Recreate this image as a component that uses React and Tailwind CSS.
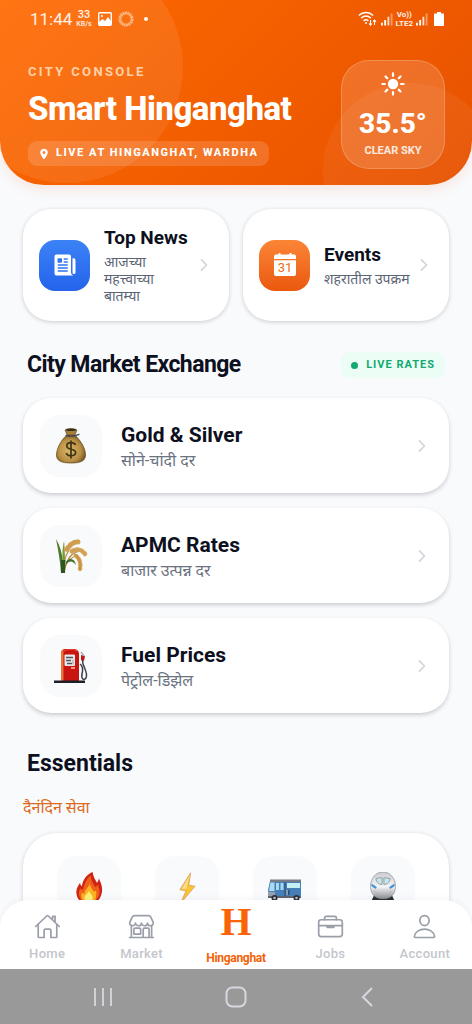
import React, { useState } from 'react'
import {
  IoNewspaper,
  IoLocationSharp,
  IoSunny,
  IoHomeOutline,
  IoStorefrontOutline,
  IoBriefcaseOutline,
  IoPersonOutline,
  IoChevronForward,
} from 'react-icons/io5'

// Emoji style drawings
const MoneyBag = () => (
  <svg viewBox="0 0 36 36" className="w-9 h-9" aria-hidden="true">
    <defs>
      <radialGradient id="bag" cx="45%" cy="55%" r="60%">
        <stop offset="0%" stopColor="#dcb868" />
        <stop offset="65%" stopColor="#b98f45" />
        <stop offset="100%" stopColor="#6f5120" />
      </radialGradient>
    </defs>
    <path d="M14 7c-4 3-10.500 12-10.500 20 0 6 5 8 14.500 8s14.500-2 14.500-8c0-8-6.500-16-10.500-20z" fill="url(#bag)" stroke="#5f4519" strokeWidth=".7" />
    <path d="M12 2c3-2 9-2 12 0l-2 5h-8z" fill="#a57e3c" stroke="#5f4519" strokeWidth=".6" />
    <ellipse cx="18" cy="1.9" rx="5" ry="1.1" fill="#33301f" />
    <path d="M13 7.400c3 1 7 1 10 0M23 7.400l3-1" stroke="#3c4658" strokeWidth="1.200" fill="none" strokeLinecap="round" />
    <path d="M22.500 17c-.7-1.700-2.400-2.300-4.400-2.300-2.500 0-4.300 1.200-4.300 3.200 0 4.600 8.800 2.100 8.800 6.600 0 2-1.900 3.200-4.500 3.200-2.300 0-4.200-.8-4.800-2.800M18 12.400v18" stroke="#3d3516" strokeWidth="1.700" fill="none" />
  </svg>
)

const Rice = () => (
  <svg viewBox="0 0 36 36" className="w-9 h-9" aria-hidden="true">
    <path d="M10 35C10 22 14 12 22 4M11 35C13 22 18 13 29 13M12 30c2-7 6-11 13-13" stroke="#b5924a" strokeWidth="1.300" fill="none" />
    <path d="M8 35C7 22 5 11 3 1c4 7 7 15 8 34z" fill="#4d7b2c" />
    <path d="M10 34C9 22 9 11 11 3c1 8 1 18 1 31z" fill="#7b9b3a" />
    <path d="M13 24c3-5 9-4 10 3-3-4-6-5-10-1z" fill="#3d6f2c" />
    <path d="M8 22h4.500l-.5 13H8z" fill="#2f5425" />
    <path d="M14 11c3-5 7-7 11-7" stroke="#d8a657" strokeWidth="5" strokeLinecap="round" strokeDasharray="2 2.500" fill="none" />
    <path d="M13 12c4-6 8-8 12-9" stroke="#cf9c50" strokeWidth="3" strokeLinecap="round" fill="none" />
    <path d="M19 13c6-3 10-1 13 3" stroke="#dbab5e" strokeWidth="4.600" strokeLinecap="round" strokeDasharray="2 2.500" fill="none" />
    <path d="M18 14c6-4 11-2 14 2" stroke="#d0a055" strokeWidth="2.800" strokeLinecap="round" fill="none" />
    <path d="M23 18c4 3 5 8 4 13" stroke="#dbab5e" strokeWidth="4.400" strokeLinecap="round" strokeDasharray="2 2.500" fill="none" />
    <path d="M22 17c5 3 6 8 5 14" stroke="#c89446" strokeWidth="2.500" strokeLinecap="round" fill="none" />
  </svg>
)

const FuelPump = () => (
  <svg viewBox="0 0 36 36" className="w-9 h-9" aria-hidden="true">
    <path d="M27 16c3 2 3 6 2 10-1 5 2 7 4 4 2-4-1-9-3-14l-1-7" stroke="#3a3f4a" strokeWidth="1.500" fill="none" />
    <path d="M8 33V6c0-4 2-5 5-5h7c4 0 6 2 6 5v27z" fill="#c9150f" />
    <path d="M8 33V6c0-3 1-4 2.500-5v32z" fill="#e9743a" />
    <path d="M11 3c3-2 11-2 13 0" stroke="#e84a38" strokeWidth="1.200" fill="none" />
    <rect x="11.500" y="6.500" width="10.500" height="11.500" rx="1" fill="#e8e9ea" />
    <path d="M13 9.500h7M13 12.500h5M14 15.500h5" stroke="#4e5560" strokeWidth="1.400" />
    <path d="M20 11.500v5" stroke="#a7abb1" strokeWidth="1.200" />
    <path d="M18 20h4" stroke="#f4bfb0" strokeWidth="1.500" />
    <path d="M28 7l4 1-1 5-3-1z" fill="#b31a14" />
    <path d="M28 4l3 4" stroke="#a7abb1" strokeWidth="1.500" />
    <path d="M1 32.500h31V35H1z" fill="#1d1f2b" />
  </svg>
)

const Fire = () => (
  <svg viewBox="0 0 36 36" className="w-8 h-8" aria-hidden="true">
    <path d="M22 0c1 6 3 9 5 12 1-1 2-3 2-5 3 6 5 12 3 18-2 7-7 11-14 11S5 32 4 25c-1-6 2-10 4-13 0 2 1 3 2 4C11 9 15 3 22 0z" fill="#cf2414" />
    <path d="M20 4c0 6 3 9 5 13 1-1 2-1 3-3 2 6 3 10 0 15-3 4-6 6-10 6S8 33 7 27c-1-3 0-6 1-9 1 2 2 2 3 2 2-5 3-12 9-16z" fill="#f0601c" />
    <path d="M19 13c0 4 3 6 4 9l3-1c1 8-1 14-8 14S8 29 10 23l3 2c0-5 4-7 6-12z" fill="#fbb321" />
    <path d="M18 21c1 4 5 5 4 9-1 4-8 4-9 0-1-4 4-5 5-9z" fill="#fff07a" />
  </svg>
)

const Bolt = () => (
  <svg viewBox="0 0 36 36" className="w-8 h-8" aria-hidden="true">
    <path d="M22 1L10 20l7 1-6 14 16-19-7-1z" fill="#f9c62f" stroke="#dfa05a" strokeWidth="1" strokeLinejoin="round" />
    <path d="M21 4L12 19l5 .5z" fill="#fadb9c" />
  </svg>
)

const Bus = () => (
  <svg viewBox="0 0 36 36" className="w-9 h-9" aria-hidden="true">
    <path d="M3 11h31v16H2l-1-7z" fill="#467fb5" />
    <path d="M3 9.500h31V12H3z" fill="#777c86" />
    <path d="M3.500 12.500h4V21H2z" fill="#a9dcf2" />
    <path d="M9 13h3v7H9zM13.500 13h3v7h-3z" fill="#a5daf4" />
    <path d="M20 13h13v5H20z" fill="#c4f0f4" />
    <path d="M18 12v14" stroke="#264e7c" strokeWidth="1" />
    <path d="M18.500 20h4v5h-4z" fill="#254e79" />
    <path d="M20 20v5" stroke="#e6eef4" strokeWidth="1" />
    <path d="M1 22h7v4H1z" fill="#97a0ac" />
    <path d="M1 26h33v2H1z" fill="#5c626e" />
    <circle cx="7.500" cy="28" r="3" fill="#2c3038" />
    <circle cx="29.500" cy="28" r="3" fill="#2c3038" />
    <circle cx="7.500" cy="28" r="1.300" fill="#b7bcc4" />
    <circle cx="29.500" cy="28" r="1.300" fill="#b7bcc4" />
  </svg>
)

const Train = () => (
  <svg viewBox="0 0 36 36" className="w-8 h-8" aria-hidden="true">
    <defs>
      <linearGradient id="nose" x1="0" y1="0" x2="0" y2="1">
        <stop offset="0%" stopColor="#c9cbcf" />
        <stop offset="55%" stopColor="#f4f4f5" />
        <stop offset="100%" stopColor="#8c8f94" />
      </linearGradient>
    </defs>
    <path d="M8 26h20l4 9H4z" fill="#2b2e35" />
    <path d="M18 0c8 0 14 7 14 16 0 8-4 14-14 14S4 24 4 16C4 7 10 0 18 0z" fill="url(#nose)" stroke="#8e9095" strokeWidth=".8" />
    <path d="M10 7.500c2-.8 4.500-1 7-1v7.500c-4 0-6-2-7-6.500zM26 7.500c-2-.8-4.500-1-7-1v7.500c4 0 6-2 7-6.500z" fill="#c4e6ea" stroke="#7e868c" strokeWidth=".8" />
    <path d="M5 13l6 4-1 2-5-3zM31 13l-6 4 1 2 5-3z" fill="#4191de" />
    <path d="M8 21c4 6 16 6 20 0" stroke="#b4b6ba" strokeWidth="1" fill="none" />
  </svg>
)

const CalendarIcon = () => (
  <svg viewBox="0 0 24 24" className="w-6 h-6" aria-hidden="true">
    <path d="M3 1.500h2.500V0h2v1.500h9V0h2v1.500H21c1.200 0 2 .8 2 2V6H1V3.500c0-1.200.8-2 2-2z" fill="#fff" />
    <path d="M1 7.200h22V21c0 1.200-.8 2-2 2H3c-1.200 0-2-.8-2-2z" fill="#fff" />
    <text x="12" y="19.400" textAnchor="middle" fontSize="13" fontFamily="Roboto, sans-serif" fontWeight="400" fill="#ee6c14">31</text>
  </svg>
)

const Signal = () => (
  <svg viewBox="0 0 13 14" className="w-3 h-3.5" aria-hidden="true">
    <path d="M0 11h2v3H0zM3.500 8h2v6h-2z" fill="#fff" />
    <path d="M7 4.500h2V14H7z" fill="#fff" opacity=".8" />
    <path d="M10.500 1h2v13h-2z" fill="#fff" opacity=".4" />
  </svg>
)

const markets = [
  { title: 'Gold & Silver', sub: 'सोने-चांदी दर', Icon: MoneyBag },
  { title: 'APMC Rates', sub: 'बाजार उत्पन्न दर', Icon: Rice },
  { title: 'Fuel Prices', sub: 'पेट्रोल-डिझेल', Icon: FuelPump },
]

const essentials = [
  { name: 'Gas', Icon: Fire },
  { name: 'Electricity', Icon: Bolt },
  { name: 'Bus', Icon: Bus },
  { name: 'Train', Icon: Train },
]

const tabs = [
  { name: 'Home', Icon: IoHomeOutline },
  { name: 'Market', Icon: IoStorefrontOutline },
  { name: 'Hinganghat' },
  { name: 'Jobs', Icon: IoBriefcaseOutline },
  { name: 'Account', Icon: IoPersonOutline },
]

function StatusBar() {
  return (
    <div className="flex items-center justify-between h-9 pt-px pl-[30px] pr-7 text-white/90">
      <div className="flex items-center">
        <span className="text-[17px] leading-5">11:44</span>
        <span className="flex flex-col items-center ml-1 font-medium">
          <span className="text-[11px] leading-[11px]">33</span>
          <span className="text-[7px] leading-[8px]">KB/s</span>
        </span>
        <svg viewBox="0 0 14 14" className="w-3.5 h-3.5 ml-1.5" aria-hidden="true">
          <rect x=".7" y=".7" width="12.600" height="12.600" rx="1" fill="none" stroke="#fff" strokeWidth="1.400" />
          <path d="M1 10l3.500-3 2.500 2 3-4 3 4v4H1z" fill="#fff" />
          <circle cx="4" cy="4" r="1" fill="#fff" />
        </svg>
        <svg viewBox="0 0 16 16" className="w-4 h-4 ml-1.5" aria-hidden="true">
          <circle cx="8" cy="8" r="6" fill="none" stroke="#fdb57e" strokeWidth="3" strokeDasharray="2 .4" />
        </svg>
        <span className="w-1 h-1 ml-2.5 rounded-full bg-white"></span>
      </div>
      <div className="flex items-center">
        <svg viewBox="0 0 19 15" className="w-[19px] h-[15px] mr-1" fill="none" stroke="#fff" strokeWidth="1.600" aria-hidden="true">
          <path d="M.8 4.500C5 .5 11 .5 15.200 4.500M3.200 7.200c3-2.700 6.700-2.700 9.600 0M5.600 9.800c1.700-1.400 3.200-1.400 4.800 0" />
          <circle cx="8" cy="12" r="1" fill="#fff" stroke="none" />
          <path d="M12.500 9v5M11 12.500l1.500 1.700 1.500-1.700M16.500 14V9M15 10.700L16.500 9l1.500 1.700" strokeWidth="1.100" />
        </svg>
        <Signal />
        <span className="flex flex-col items-center mx-[3px] font-bold">
          <span className="text-[8px] leading-[9px]">Vo))</span>
          <span className="text-[8px] leading-[9px]">LTE2</span>
        </span>
        <Signal />
        <svg viewBox="0 0 10 14" className="w-2.5 h-3.5 ml-1.5" aria-hidden="true">
          <path d="M3 0h4v1.500h2c.6 0 1 .4 1 1V13c0 .6-.4 1-1 1H1c-.6 0-1-.4-1-1V2.500c0-.6.4-1 1-1h2z" fill="#fff" />
        </svg>
      </div>
    </div>
  )
}

function App() {
  const [activeTab, setActiveTab] = useState('Hinganghat')

  return (
    <div className="flex flex-col h-screen overflow-hidden bg-[#f9fafc] text-[#0d1020] font-[Roboto,'Noto_Sans',sans-serif]">
      <main className="flex-1 min-h-0 overflow-y-auto [scrollbar-width:none]">
        {/* Header */}
        <header className="relative overflow-hidden rounded-b-[44px] bg-linear-135 from-[#ff6a00] to-[#e65100] pb-4 shadow-[0_4px_14px_rgba(230,81,0,0.12)]">
          <div className="absolute -left-[49px] -top-[49px] w-[232px] h-[232px] rounded-full bg-white/8"></div>
          <div className="absolute -right-[25px] -bottom-[72px] w-[174px] h-[174px] rounded-full bg-white/5"></div>
          <div className="relative">
            <StatusBar />
            <div className="flex items-start justify-between pl-7 pr-[27px] pt-6">
              <div className="pt-1">
                <p className="text-[13px] leading-4 font-bold tracking-[0.18em] text-[#ffd0a8]">CITY CONSOLE</p>
                <h1 className="mt-[9px] text-[33px] leading-10 font-extrabold tracking-[-0.015em] text-white whitespace-nowrap">Smart Hinganghat</h1>
                <p className="inline-flex items-center gap-1.5 h-[25px] mt-3 px-2.5 rounded-[9px] bg-white/15 text-[11px] font-extrabold tracking-[0.14em] text-white whitespace-nowrap">
                  <IoLocationSharp className="w-3 h-3" />
                  LIVE AT HINGANGHAT, WARDHA
                </p>
              </div>
              <div className="flex flex-col items-center w-[104px] h-[109px] pt-2.5 rounded-[28px] border border-white/20 bg-white/15 text-white">
                <IoSunny className="w-[26px] h-[26px]" />
                <p className="mt-[11px] text-[28px] leading-8 font-extrabold">35.5°</p>
                <p className="mt-[3px] text-[11px] leading-4 font-bold text-white/85">CLEAR SKY</p>
              </div>
            </div>
          </div>
        </header>

        {/* News and events */}
        <div className="grid grid-cols-2 gap-3.5 px-[23px] mt-6">
          <a href="#news" className="flex items-center gap-3.5 p-4 rounded-[28px] bg-white shadow-[0_1px_4px_rgba(15,23,42,0.2)]">
            <span className="flex items-center justify-center shrink-0 w-[51px] h-[51px] rounded-2xl bg-linear-to-b from-[#3b82f6] to-[#2563eb]">
              <IoNewspaper className="w-6 h-6 text-white" />
            </span>
            <span className="flex-1 min-w-0">
              <span className="block text-[19px] leading-[26px] font-bold whitespace-nowrap">Top News</span>
              <span className="block mt-[3px] pr-4 text-[14px] leading-[17px] text-[#5b6474]">आजच्या महत्त्वाच्या बातम्या</span>
            </span>
            <IoChevronForward className="shrink-0 -ml-3.5 w-[18px] h-[18px] text-gray-300" />
          </a>
          <a href="#events" className="flex items-center gap-3.5 p-4 rounded-[28px] bg-white shadow-[0_1px_4px_rgba(15,23,42,0.2)]">
            <span className="flex items-center justify-center shrink-0 w-[51px] h-[51px] rounded-2xl bg-linear-to-b from-[#fb8535] to-[#ea580c]">
              <CalendarIcon />
            </span>
            <span className="flex-1 min-w-0">
              <span className="block text-[19px] leading-[26px] font-bold whitespace-nowrap">Events</span>
              <span className="block mt-[3px] text-[14px] leading-[17px] text-[#5b6474] whitespace-nowrap">शहरातील उपक्रम</span>
            </span>
            <IoChevronForward className="shrink-0 -ml-3.5 w-[18px] h-[18px] text-gray-300" />
          </a>
        </div>

        {/* Market rates */}
        <section className="px-[23px] mt-[30px]">
          <div className="flex items-center justify-between px-1">
            <h2 className="text-[23px] leading-7 font-bold tracking-tight">City Market Exchange</h2>
            <span className="flex items-center gap-2 h-[26px] px-2.5 rounded-[9px] bg-[#ecfdf5] text-[11px] font-bold tracking-[1px] text-[#12a873]">
              <span className="w-[7px] h-[7px] rounded-full bg-[#12a873]"></span>
              LIVE RATES
            </span>
          </div>
          <div className="flex flex-col gap-[15px] mt-[19px]">
            {markets.map(({ title, sub, Icon }) => (
              <a key={title} href="#market" className="flex items-center h-[95px] pl-[17px] pr-[18px] rounded-[28px] bg-white shadow-[0_2px_4px_rgba(15,23,42,0.2)]">
                <span className="flex items-center justify-center w-[62px] h-[62px] rounded-[20px] bg-[#f9fafc]">
                  <Icon />
                </span>
                <span className="flex-1 ml-[19px] pt-0.5">
                  <span className="block text-[21px] leading-6 font-bold">{title}</span>
                  <span className="block mt-1 text-[16px] leading-5 text-[#6b7280]">{sub}</span>
                </span>
                <IoChevronForward className="w-[18px] h-[18px] text-gray-300" />
              </a>
            ))}
          </div>
        </section>

        {/* Essentials */}
        <section className="px-[23px] mt-[37px]">
          <h2 className="px-1 text-[23px] leading-7 font-bold">Essentials</h2>
          <p className="mt-5 text-[16px] leading-5 text-[#dc6a1c]">दैनंदिन सेवा</p>
          <div className="grid grid-cols-4 mt-[15px] px-[17px] pt-[23px] pb-28 rounded-[34px] bg-white shadow-[0_1px_4px_rgba(15,23,42,0.2)]">
            {essentials.map(({ name, Icon }) => (
              <button key={name} type="button" aria-label={name} className="flex items-center justify-center justify-self-center w-16 h-16 rounded-[20px] bg-[#f9fafc]">
                <Icon />
              </button>
            ))}
          </div>
        </section>
      </main>

      {/* Bottom tabs */}
      <nav className="relative z-10 grid grid-cols-5 shrink-0 h-[69px] -mt-7 rounded-t-[28px] bg-white shadow-[0_-2px_6px_rgba(15,23,42,0.04)]">
        {tabs.map(({ name, Icon }) => (
          <button
            key={name}
            type="button"
            onClick={() => setActiveTab(name)}
            className={`flex flex-col items-center ${activeTab === name ? 'text-[#f26207]' : 'text-[#c3c6cc]'}`}
          >
            {Icon ? (
              <>
                <Icon className="w-[27px] h-[27px] mt-[13px] text-[#9a9ea8]" />
                <span className="mt-1.5 text-[13px] leading-4 font-medium tracking-wide">{name}</span>
              </>
            ) : (
              <>
                <span className="mt-1 text-[40px] leading-9 font-bold text-[#fb6406] font-['Liberation_Serif',serif]">H</span>
                <span className="mt-2.5 text-[12px] leading-4 font-bold tracking-tight">{name}</span>
              </>
            )}
          </button>
        ))}
      </nav>

      {/* System navigation */}
      <div className="relative z-10 grid grid-cols-[1fr_60px_1fr] items-center shrink-0 h-[55px] bg-[#999999] text-[#d5d8de]">
        <button type="button" aria-label="Recent apps" className="flex justify-center">
          <svg viewBox="0 0 20 20" className="w-5 h-5" fill="none" stroke="currentColor" strokeWidth="1.800" aria-hidden="true">
            <path d="M2 1v18M10 1v18M18 1v18" />
          </svg>
        </button>
        <button type="button" aria-label="Home screen" className="flex justify-center">
          <svg viewBox="0 0 22 22" className="w-[22px] h-[22px]" fill="none" stroke="currentColor" strokeWidth="2" aria-hidden="true">
            <rect x="1.500" y="1.500" width="19" height="19" rx="6" />
          </svg>
        </button>
        <button type="button" aria-label="Back" className="flex justify-center">
          <svg viewBox="0 0 20 20" className="w-5 h-5" fill="none" stroke="currentColor" strokeWidth="2" aria-hidden="true">
            <path d="M13 1L4 10l9 9" />
          </svg>
        </button>
      </div>
    </div>
  )
}

export default App
